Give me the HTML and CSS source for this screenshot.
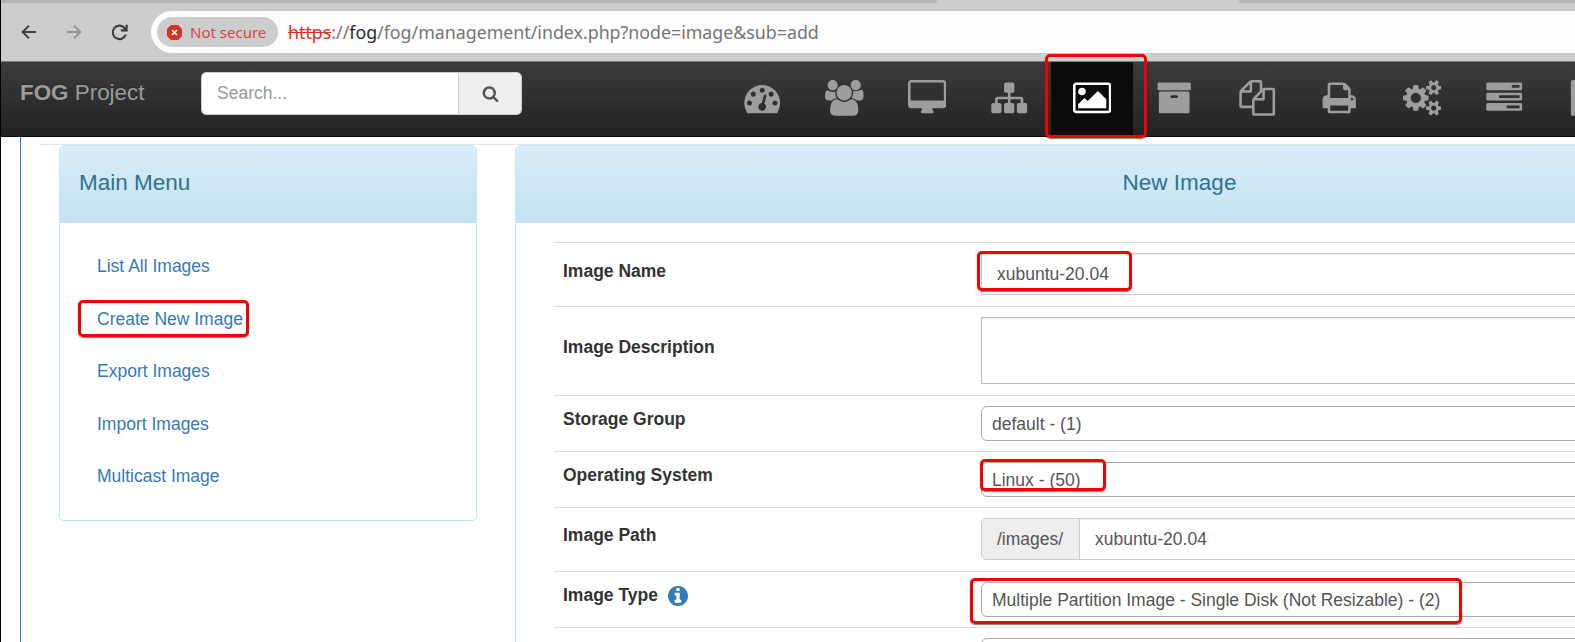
FILE: index.html
```html
<!DOCTYPE html>
<html lang="en">
<head>
<meta charset="utf-8">
<title>FOG Project - New Image</title>
<link rel="stylesheet" href="styles.css">
</head>
<body>
<div class="window">
  <div class="tabstrip"><span class="tab-gap left"></span><span class="tab-gap right"></span></div>
  <div class="toolbar">
    <svg class="tool back" viewBox="0 0 16 16"><path d="M15 8H2M8 1.6L1.6 8 8 14.4"/></svg>
    <svg class="tool forward" viewBox="0 0 16 16"><path d="M1 8h13M8 1.6L14.4 8 8 14.4"/></svg>
    <svg class="tool reload" viewBox="0 0 16 16"><path d="M13.9 10A6.300 6.300 0 1 1 12.700 3.700L14.400 5.500M14.700 .6V6H9.300"/></svg>
    <div class="address">
      <span class="chip">
        <svg class="warn" viewBox="0 0 16 16"><path class="oct" d="M4.7 0h6.6L16 4.7v6.6L11.300 16H4.700L0 11.300V4.700z"/><path class="cross" d="M5.300 5.300l5.400 5.400M10.700 5.300l-5.400 5.400"/></svg>
        <span class="chip-text">Not secure</span>
      </span>
      <span class="url"><s>https</s>://<b>fog</b>/fog/management/index.php?node=image&amp;sub=add</span>
    </div>
  </div>
  <nav class="navbar">
    <a class="brand"><b>FOG</b> Project</a>
    <div class="search">
      <span class="search-field">Search...</span>
      <span class="search-btn"><svg viewBox="0 0 1792 1792"><path d="M1216 832q0-185-131.500-316.500t-316.500-131.500-316.500 131.500-131.500 316.500 131.500 316.500 316.500 131.500 316.500-131.500 131.500-316.500zm512 832q0 52-38 90t-90 38q-54 0-90-38l-343-342q-179 124-399 124-143 0-273.500-55.500t-225-150-150-225-55.500-273.500 55.500-273.500 150-225 225-150 273.500-55.500 273.500 55.500 225 150 150 225 55.500 273.500q0 220-124 399l343 343q37 37 37 90z"/></svg></span>
    </div>
    <ul class="icons">
      <li><svg viewBox="-64 0 1920 1792"><path d="M384 1152q0-53-37.500-90.500t-90.500-37.500-90.500 37.500-37.500 90.500 37.500 90.500 90.500 37.500 90.500-37.500 37.500-90.500zm192-448q0-53-37.500-90.500t-90.500-37.500-90.500 37.500-37.500 90.500 37.500 90.500 90.500 37.500 90.500-37.500 37.500-90.500zm428 481l101-382q6-26-7.500-48.500t-38.500-29.500-48 6.500-30 39.500l-101 382q-60 5-107 43.500t-63 98.500q-20 77 20 146t117 89 146-20 89-117q16-60-6-117t-72-91zm660-33q0-53-37.500-90.500t-90.500-37.500-90.500 37.500-37.500 90.500 37.500 90.500 90.500 37.500 90.500-37.500 37.500-90.500zm-640-640q0-53-37.500-90.500t-90.500-37.500-90.500 37.500-37.500 90.500 37.500 90.500 90.500 37.500 90.500-37.500 37.500-90.500zm448 192q0-53-37.500-90.500t-90.500-37.500-90.500 37.500-37.500 90.500 37.500 90.500 90.500 37.500 90.500-37.500 37.500-90.500zm320 448q0 261-141 483-19 29-54 29h-1402q-35 0-54-29-141-221-141-483 0-182 71-348t191-286 286-191 348-71 348 71 286 191 191 286 71 348z"/></svg></li>
      <li><svg viewBox="-64 0 1920 1792"><path d="M529 896q-162 5-265 128h-134q-82 0-138-40.500t-56-118.500q0-353 124-353 6 0 43.500 21t97.500 42.500 119 21.500q67 0 133-23-5 37-5 66 0 159 93 293zm1071 637q0 120-73 189.500t-194 69.500h-874q-121 0-194-69.500t-73-189.500q0-53 3.500-103.500t14-109 26.500-108.500 43-97.500 62-81 85.500-53.500 111.500-20q10 0 43 21.500t73 48 107 48 135 21.500 135-21.500 107-48 73-48 43-21.500q61 0 111.500 20t85.500 53.500 62 81 43 97.500 26.500 108.500 14 109 3.500 103.500zm-1024-1277q0 106-75 181t-181 75-181-75-75-181 75-181 181-75 181 75 75 181zm704 384q0 159-112.500 271.500t-271.500 112.500-271.500-112.500-112.500-271.500 112.500-271.500 271.500-112.500 271.500 112.500 112.500 271.500zm576 225q0 78-56 118.500t-138 40.500h-134q-103-123-265-128 93-134 93-293 0-29-5-66 66 23 133 23 59 0 119-21.500t97.500-42.500 43.500-21q124 0 124 353zm-128-609q0 106-75 181t-181 75-181-75-75-181 75-181 181-75 181 75 75 181z"/></svg></li>
      <li><svg viewBox="-64 0 1920 1792"><path d="M1728 992v-832q0-13-9.500-22.500t-22.500-9.500h-1600q-13 0-22.500 9.500t-9.500 22.500v832q0 13 9.500 22.500t22.500 9.500h1600q13 0 22.500-9.500t9.500-22.500zm128-832v1088q0 66-47 113t-113 47h-544q0 37 16 77.500t32 71 16 43.500q0 26-19 45t-45 19h-512q-26 0-45-19t-19-45q0-14 16-44t32-70 16-78h-544q-66 0-113-47t-47-113v-1088q0-66 47-113t113-47h1600q66 0 113 47t47 113z"/></svg></li>
      <li><svg viewBox="-64 0 1920 1792"><path d="M1792 1248v320q0 40-28 68t-68 28h-320q-40 0-68-28t-28-68v-320q0-40 28-68t68-28h96v-192h-512v192h96q40 0 68 28t28 68v320q0 40-28 68t-68 28h-320q-40 0-68-28t-28-68v-320q0-40 28-68t68-28h96v-192h-512v192h96q40 0 68 28t28 68v320q0 40-28 68t-68 28h-320q-40 0-68-28t-28-68v-320q0-40 28-68t68-28h96v-192q0-52 38-90t90-38h512v-192h-96q-40 0-68-28t-28-68v-320q0-40 28-68t68-28h320q40 0 68 28t28 68v320q0 40-28 68t-68 28h-96v192h512q52 0 90 38t38 90v192h96q40 0 68 28t28 68z"/></svg></li>
      <li class="active"><svg viewBox="-64 0 1920 1792"><path d="M576 576q0 80-56 136t-136 56-136-56-56-136 56-136 136-56 136 56 56 136zm1024 384v448h-1408v-192l320-320 160 160 512-512zm96-704h-1600q-13 0-22.500 9.500t-9.500 22.500v1216q0 13 9.500 22.500t22.500 9.500h1600q13 0 22.500-9.500t9.500-22.500v-1216q0-13-9.500-22.500t-22.500-9.500zm160 32v1216q0 66-47 113t-113 47h-1600q-66 0-113-47t-47-113v-1216q0-66 47-113t113-47h1600q66 0 113 47t47 113z"/></svg></li>
      <li><svg viewBox="-64 0 1920 1792"><path d="M1088 832q0-26-19-45t-45-19h-256q-26 0-45 19t-19 45 19 45 45 19h256q26 0 45-19t19-45zm576-192v960q0 26-19 45t-45 19h-1408q-26 0-45-19t-19-45v-960q0-26 19-45t45-19h1408q26 0 45 19t19 45zm64-448v256q0 26-19 45t-45 19h-1536q-26 0-45-19t-19-45v-256q0-26 19-45t45-19h1536q26 0 45 19t19 45z"/></svg></li>
      <li><svg viewBox="-64 0 1920 1792"><path d="M1696 384q40 0 68 28t28 68v1216q0 40-28 68t-68 28h-960q-40 0-68-28t-28-68v-288h-544q-40 0-68-28t-28-68v-672q0-40 20-88t48-76l408-408q28-28 76-48t88-20h416q40 0 68 28t28 68v328q68-40 128-40h416zm-544 213l-299 299h299v-299zm-640-384l-299 299h299v-299zm196 647l316-316v-416h-384v416q0 40-28 68t-68 28h-416v640h512v-256q0-40 20-88t48-76zm956 804v-1152h-384v416q0 40-28 68t-68 28h-416v640h896z"/></svg></li>
      <li><svg viewBox="-64 0 1920 1792"><path d="M448 1536h896v-256h-896v256zm0-640h896v-384h-160q-40 0-68-28t-28-68v-160h-640v640zm1152 64q0-26-19-45t-45-19-45 19-19 45 19 45 45 19 45-19 19-45zm128 0v416q0 13-9.500 22.500t-22.500 9.500h-224v160q0 40-28 68t-68 28h-960q-40 0-68-28t-28-68v-160h-224q-13 0-22.500-9.500t-9.500-22.500v-416q0-79 56.500-135.500t135.500-56.500h64v-544q0-40 28-68t68-28h672q40 0 88 20t76 48l152 152q28 28 48 76t20 88v256h64q79 0 135.500 56.500t56.500 135.500z"/></svg></li>
      <li><svg viewBox="0 0 1920 1792"><path d="M896 896q0-106-75-181t-181-75-181 75-75 181 75 181 181 75 181-75 75-181zm768 512q0-52-38-90t-90-38-90 38-38 90q0 53 37.500 90.500t90.500 37.500 90.500-37.500 37.500-90.500zm0-1024q0-52-38-90t-90-38-90 38-38 90q0 53 37.500 90.500t90.500 37.500 90.500-37.500 37.500-90.500zm-384 421v185q0 10-7 19.500t-16 10.500l-155 24q-11 35-32 76 34 48 90 115 7 11 7 20 0 12-7 19-23 30-82.500 89.500t-78.500 59.500q-11 0-21-7l-115-90q-37 19-77 31-11 108-23 155-7 24-30 24h-186q-11 0-20-7.500t-10-17.500l-23-153q-34-10-75-31l-118 89q-7 7-20 7-11 0-21-8-144-133-144-160 0-9 7-19 10-14 41-53t47-61q-23-44-35-82l-152-24q-10-1-17-9.500t-7-19.500v-185q0-10 7-19.500t16-10.500l155-24q11-35 32-76-34-48-90-115-7-11-7-20 0-12 7-20 22-30 82-89t79-59q11 0 21 7l115 90q34-18 77-32 11-108 23-154 7-24 30-24h186q11 0 20 7.500t10 17.500l23 153q34 10 75 31l118-89q8-7 20-7 11 0 21 8 144 133 144 160 0 8-7 19-12 16-42 54t-45 60q23 48 34 82l152 23q10 2 17 10.500t7 19.500zm640 533v140q0 16-149 31-12 27-30 52 51 113 51 138 0 4-4 7-122 71-124 71-8 0-46-47t-52-68q-20 2-30 2t-30-2q-14 21-52 68t-46 47q-2 0-124-71-4-3-4-7 0-25 51-138-18-25-30-52-149-15-149-31v-140q0-16 149-31 13-29 30-52-51-113-51-138 0-4 4-7 4-2 35-20t59-34 30-16q8 0 46 46.500t52 67.500q20-2 30-2t30 2q51-71 92-112l6-2q4 0 124 70 4 3 4 7 0 25-51 138 17 23 30 52 149 15 149 31zm0-1024v140q0 16-149 31-12 27-30 52 51 113 51 138 0 4-4 7-122 71-124 71-8 0-46-47t-52-68q-20 2-30 2t-30-2q-14 21-52 68t-46 47q-2 0-124-71-4-3-4-7 0-25 51-138-18-25-30-52-149-15-149-31v-140q0-16 149-31 13-29 30-52-51-113-51-138 0-4 4-7 4-2 35-20t59-34 30-16q8 0 46 46.500t52 67.500q20-2 30-2t30 2q51-71 92-112l6-2q4 0 124 70 4 3 4 7 0 25-51 138 17 23 30 52 149 15 149 31z"/></svg></li>
      <li><svg viewBox="-64 0 1920 1792"><path d="M1024 1408h640v-128h-640v128zm-384-512h1024v-128h-1024v128zm640-512h384v-128h-384v128zm512 832v256q0 26-19 45t-45 19h-1664q-26 0-45-19t-19-45v-256q0-26 19-45t45-19h1664q26 0 45 19t19 45zm0-512v256q0 26-19 45t-45 19h-1664q-26 0-45-19t-19-45v-256q0-26 19-45t45-19h1664q26 0 45 19t19 45zm0-512v256q0 26-19 45t-45 19h-1664q-26 0-45-19t-19-45v-256q0-26 19-45t45-19h1664q26 0 45 19t19 45z"/></svg></li>
      <li><svg viewBox="-64 0 1920 1792"><path d="M224 0h1344q96 0 96 96v1600q0 96-96 96h-1344q-96 0-96-96v-1600q0-96 96-96z"/></svg></li>
    </ul>
  </nav>
  <main class="page">
    <div class="content">
      <section class="panel menu">
        <h4 class="panel-head">Main Menu</h4>
        <ul class="menu-list">
          <li><a>List All Images</a></li>
          <li><a>Create New Image</a></li>
          <li><a>Export Images</a></li>
          <li><a>Import Images</a></li>
          <li><a>Multicast Image</a></li>
        </ul>
      </section>
      <section class="panel form">
        <h4 class="panel-head centered">New Image</h4>
        <div class="rows">
          <div class="row tall"><label>Image Name</label><div class="input square">xubuntu-20.04</div></div>
          <div class="row area"><label>Image Description</label><div class="textarea"></div></div>
          <div class="row"><label>Storage Group</label><div class="select">default - (1)</div></div>
          <div class="row"><label>Operating System</label><div class="select">Linux - (50)</div></div>
          <div class="row tall"><label>Image Path</label><div class="input group"><span class="addon">/images/</span><span class="group-value">xubuntu-20.04</span></div></div>
          <div class="row"><label>Image Type <svg class="info" viewBox="128 128 1536 1536"><path d="M1152 1376v-160q0-14-9-23t-23-9h-96v-512q0-14-9-23t-23-9h-320q-14 0-23 9t-9 23v160q0 14 9 23t23 9h96v320h-96q-14 0-23 9t-9 23v160q0 14 9 23t23 9h448q14 0 23-9t9-23zm-128-896v-160q0-14-9-23t-23-9h-192q-14 0-23 9t-9 23v160q0 14 9 23t23 9h192q14 0 23-9t9-23zm640 416q0 209-103 385.500t-279.500 279.500-385.500 103-385.500-103-279.500-279.500-103-385.500 103-385.500 279.500-279.500 385.500-103 385.500 103 279.500 279.500 103 385.500z"/></svg></label><div class="select">Multiple Partition Image - Single Disk (Not Resizable) - (2)</div></div>
          <div class="row"><label></label><div class="select"></div></div>
        </div>
      </section>
    </div>
  </main>
  <i class="mark mark-nav"></i>
  <i class="mark mark-create"></i>
  <i class="mark mark-name"></i>
  <i class="mark mark-os"></i>
  <i class="mark mark-type"></i>
</div>
</body>
</html>
```
FILE: styles.css
```css
* { box-sizing: border-box; }
body {
  margin: 0;
  overflow: hidden;
  background: #fff;
  font-family: "Liberation Sans", Arial, sans-serif;
  font-size: 17.500px;
  color: #333;
}
ul { list-style: none; margin: 0; padding: 0; }
h4 { margin: 0; font-weight: 400; }
.window {
  position: relative;
  width: 1575px;
  height: 642px;
  overflow: hidden;
  border-left: 1px solid #000;
}

/* browser chrome */
.tabstrip { height: 3px; background: #cdcdcd; display: flex; justify-content: space-between; }
.tab-gap { background: #b4b4b4; }
.tab-gap.left { width: 936px; border-bottom-right-radius: 3px; }
.tab-gap.right { width: 336px; border-bottom-left-radius: 3px; }
.toolbar {
  height: 59px;
  display: flex;
  align-items: center;
  padding: 0 0 0 20px;
  background: #cdcdcd;
  border-bottom: 1px solid #7c7c7c;
}
.tool { flex: none; width: 16px; height: 16px; fill: none; stroke: #3d3d3d; stroke-width: 2; margin-right: 29px; }
.forward { stroke: #969696; }
.reload { width: 17px; height: 17px; margin-right: 23px; }
.address {
  flex: 1;
  height: 42px;
  display: flex;
  align-items: center;
  padding-left: 6px;
  background: #fdfdfd;
  border-radius: 21px 0 0 21px;
}
.chip {
  flex: none;
  width: 121px;
  height: 30px;
  display: flex;
  align-items: center;
  gap: 8px;
  padding-left: 10px;
  border-radius: 15px;
  background: #cdcdcd;
}
.warn { width: 15px; height: 15px; }
.oct { fill: #d93025; stroke: #d93025; }
.cross { stroke: #fff; stroke-width: 1.700; fill: none; }
.chip-text { font: 15px/30px "Noto Sans", sans-serif; color: #d5473f; white-space: nowrap; }
.url {
  margin-left: 10px;
  font: 17.800px/30px "Noto Sans", sans-serif;
  color: #757575;
  white-space: nowrap;
}
.url s { color: #d93025; }
.url b { font-weight: 400; color: #2b2b2b; }

/* navigation bar */
.navbar {
  height: 75px;
  display: flex;
  align-items: flex-start;
  background: linear-gradient(#3c3c3c, #222);
  border-bottom: 1px solid #080808;
}
.brand {
  flex: none;
  width: 200px;
  padding: 18px 0 0 19px;
  font-size: 22.400px;
  line-height: 26px;
  color: #9d9d9d;
  text-shadow: 0 -1px 0 rgba(0,0,0,.25);
}
.search { flex: none; display: flex; width: 321px; height: 43px; margin-top: 10px; line-height: 41px; border: 1px solid #ccc; border-radius: 5px; overflow: hidden; }
.search-field { flex: 1; background: #fff; color: #999; padding-left: 15px; }
.search-btn { width: 63px; background: #eee; border-left: 1px solid #ccc; display: flex; align-items: center; justify-content: center; }
.search-btn svg { width: 17px; height: 17px; fill: #555; }
.icons { flex: none; display: flex; margin-left: 199px; height: 74px; }
.icons li { flex: none; width: 82.450px; display: flex; justify-content: center; padding-top: 18px; }
.icons svg { width: 38.400px; height: 35.840px; fill: #9d9d9d; }
.icons .active { background: #0b0b0b; }
.icons .active svg { fill: #fff; }

/* page body */
.page { height: 505px; margin-left: 19px; border-left: 1px solid #337ab7; padding: 7px 0 0 19px; overflow: hidden; }
.content { display: flex; gap: 38px; padding-left: 19px; border-top: 1px solid #e4e4e4; }
.panel { flex: none; border: 1px solid #bce8f1; border-radius: 5px; background: #fff; }
.panel-head {
  height: 77px;
  padding: 0 19px;
  line-height: 73px;
  font-size: 22.500px;
  color: #31708f;
  border-radius: 4px 4px 0 0;
  background: linear-gradient(#d9edf7, #c4e3f3);
}
.centered { text-align: center; }
.menu { width: 418px; height: 376px; }
.menu-list { padding: 18px 0 0 37px; }
.menu-list li { height: 52.500px; line-height: 51px; }
.menu-list a { color: #337ab7; }
.form { width: 1329px; padding-bottom: 30px; }
.rows { padding: 19px 38px 0; }
.row { display: grid; grid-template-columns: 427px 1fr; height: 56px; border-top: 1px solid #ddd; padding-top: 10px; }
.row.tall { height: 64px; }
.row.area { height: 88.500px; }
.row label { padding-left: 9px; font-weight: 700; display: flex; align-items: center; margin: -10px 0 7px; gap: 10px; }
.info { width: 20px; height: 20px; fill: #337ab7; }
.input, .select, .textarea { border: 1px solid #ccc; color: #555; background: #fff; box-shadow: inset 0 1px 1px rgba(0,0,0,.075); }
.input { height: 42px; line-height: 40px; padding-left: 15px; border-radius: 5px; }
.input.square { border-radius: 0; }
.textarea { height: 67px; border-color: #bbb; }
.select { height: 35px; line-height: 35px; padding-left: 10px; border-color: #aaa; border-radius: 6px; box-shadow: none; }
.group { display: flex; padding-left: 0; overflow: hidden; }
.addon { width: 98px; padding-left: 15px; background: #eee; border-right: 1px solid #ccc; }
.group-value { padding-left: 15px; }

/* highlight frames laid over the page */
.mark { position: absolute; border: 3px solid #f30000; border-radius: 5px; box-shadow: 0 1px 1px rgba(0,0,0,.5); }
.mark-nav { left: 1044px; top: 54px; width: 102px; height: 84px; }
.mark-create { left: 77px; top: 300px; width: 171px; height: 37px; }
.mark-name { left: 976px; top: 251px; width: 155px; height: 40px; }
.mark-os { left: 979px; top: 459px; width: 126px; height: 32px; }
.mark-type { left: 969px; top: 578px; width: 492px; height: 46px; }
```
